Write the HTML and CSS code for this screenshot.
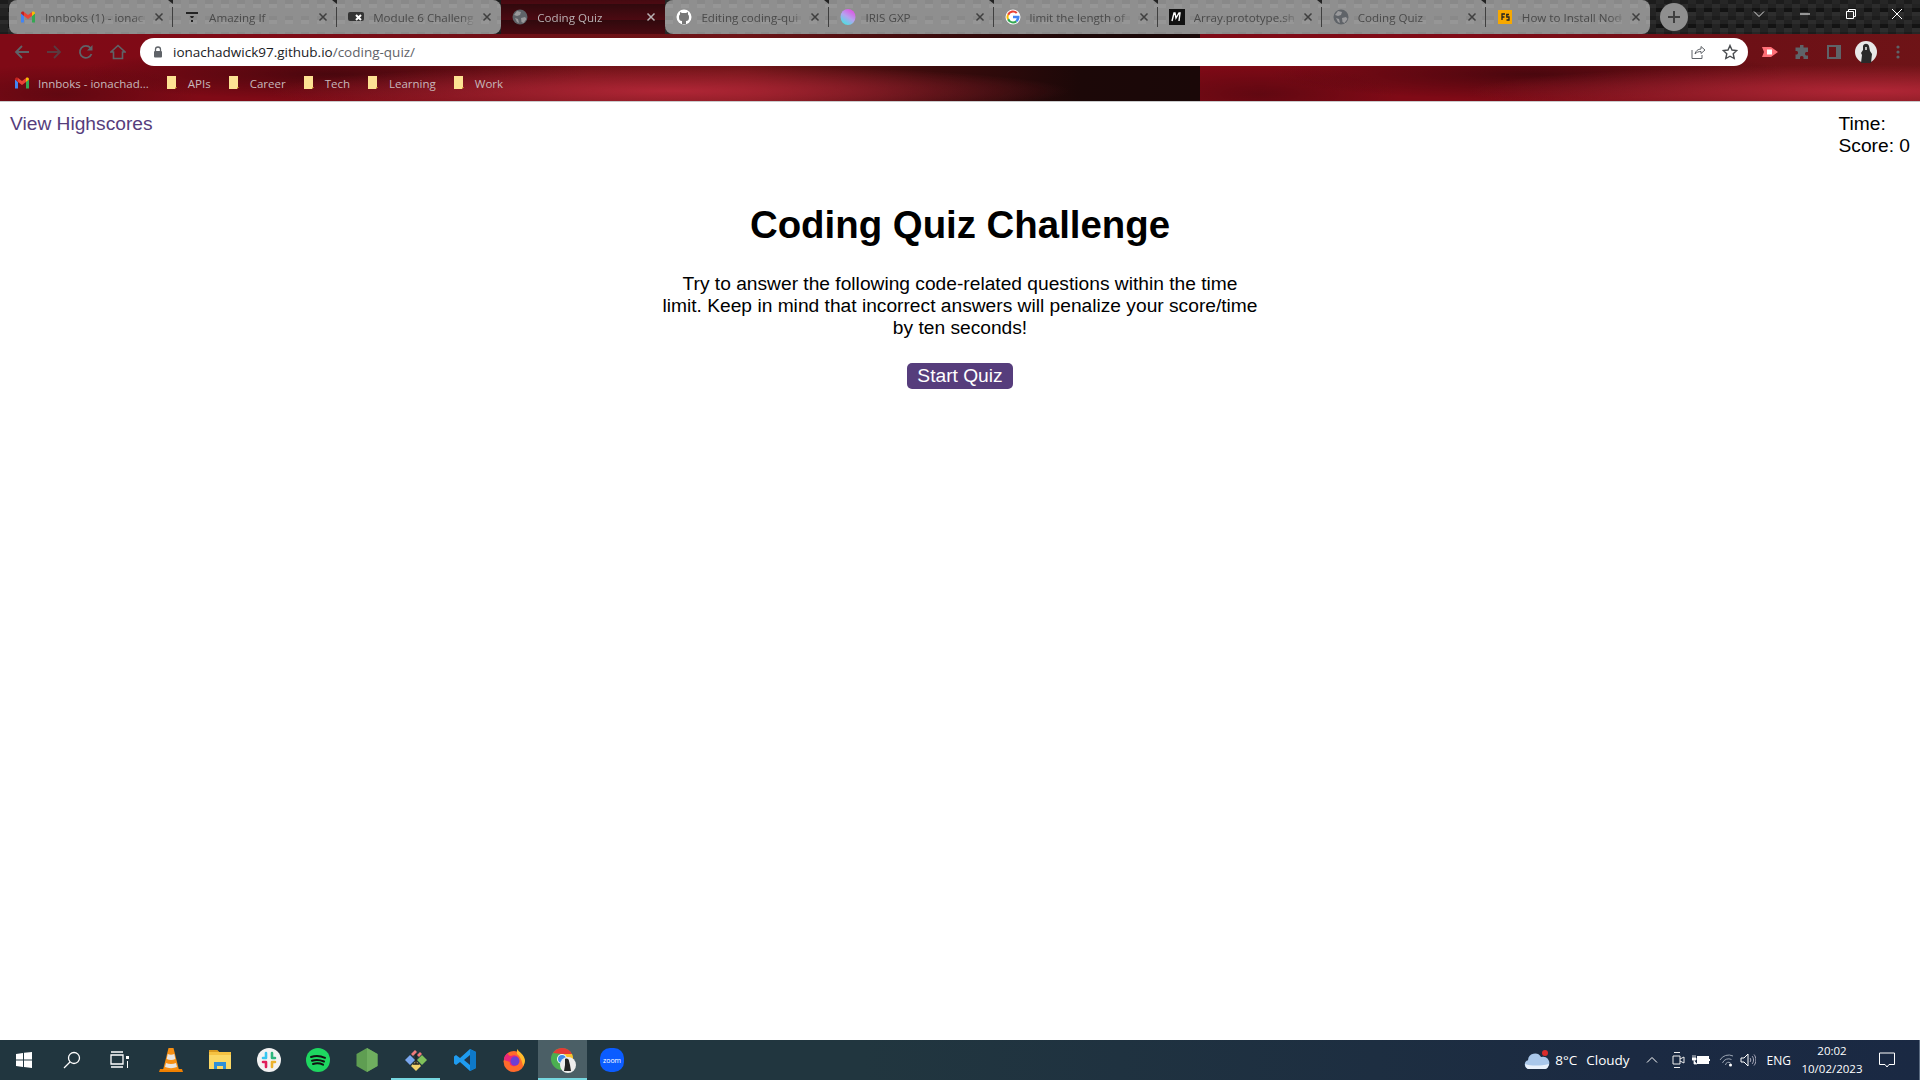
FILE: index.html
```html
<!DOCTYPE html>
<html lang="en">
<head>
  <meta charset="UTF-8">
  <title>Coding Quiz</title>
  <link rel="stylesheet" href="styles.css">
</head>
<body>
  <svg class="defs" width="0" height="0">
    <symbol id="gmail" viewBox="0 0 16 16">
      <path d="M1 4v9.500h3V7z" fill="#4285f4"/>
      <path d="M12 7v6.500h3V4z" fill="#34a853"/>
      <path d="M4 7V3l4 3 4-3v4L8 10z" fill="#ea4335"/>
      <path d="M1 4.500C1 2.500 3 2 4 3v4z" fill="#c5221f"/>
      <path d="M12 3c1-1 3-.5 3 1.500L12 7z" fill="#fbbc04"/>
    </symbol>
    <symbol id="globe" viewBox="0 0 16 16">
      <circle cx="8" cy="8" r="7.500" fill="#5f6368"/>
      <path d="M5 2l4 1-1 3-3 1-3-1zM9 9l4-1 1.500 2-3 4-2-1zM3 9l3 1 1 4-2-1z" fill="#9a9a9c"/>
    </symbol>
    <symbol id="folder" viewBox="0 0 12 16">
      <path d="M1 1h9v11l-1 0v2H1z" fill="#fde293"/>
      <path d="M9 12h2l-2 2z" fill="#e5b94a"/>
    </symbol>
    <symbol id="close" viewBox="0 0 10 10">
      <path d="M1.500 1.500l7 7M8.500 1.500l-7 7" stroke="#3f3f3f" stroke-width="1.500" fill="none"/>
    </symbol>
  </svg>

  <header class="browser">
    <div class="tabstrip">
      <div class="tab tab-first">
        <svg class="favicon"><use href="#gmail"/></svg>
        <span class="tab-title">Innboks (1) - ionac</span>
        <svg class="tab-close"><use href="#close"/></svg>
      </div>
      <div class="tab">
        <svg class="favicon" viewBox="0 0 16 16"><path d="M2 3h12v2H2zM6 7h4L9 9H7zM7 11h2v2H7z" fill="#222"/></svg>
        <span class="tab-title">Amazing If</span>
        <svg class="tab-close"><use href="#close"/></svg>
      </div>
      <div class="tab tab-last">
        <svg class="favicon" viewBox="0 0 16 16"><rect x="0" y="3" width="16" height="9" rx="2" fill="#333"/><path d="M8 6l5 5M13 6l-5 5" stroke="#fff" stroke-width="2"/></svg>
        <span class="tab-title">Module 6 Challeng</span>
        <svg class="tab-close"><use href="#close"/></svg>
      </div>
      <div class="tab tab-active">
        <svg class="favicon"><use href="#globe"/></svg>
        <span class="tab-title">Coding Quiz</span>
        <svg class="tab-close"><path d="M1.500 1.500l7 7M8.500 1.500l-7 7" stroke="#b9b1b3" stroke-width="1.500" fill="none"/></svg>
      </div>
      <div class="tab tab-first">
        <svg class="favicon" viewBox="0 0 16 16"><circle cx="8" cy="8" r="7.500" fill="#fff"/><path d="M6 15v-3c-2 0-3-1-3-4 0-1 .300-2 1-2.500V3l2 1h4l2-1v2.500c.700.500 1 1.500 1 2.500 0 3-1 4-3 4v3z" fill="#777"/></svg>
        <span class="tab-title">Editing coding-qui</span>
        <svg class="tab-close"><use href="#close"/></svg>
      </div>
      <div class="tab">
        <svg class="favicon" viewBox="0 0 16 16"><defs><linearGradient id="iris" x1="0.800" y1="0" x2="0.200" y2="1"><stop offset="0" stop-color="#e24be0"/><stop offset="0.500" stop-color="#b6a2f0"/><stop offset="1" stop-color="#3fe8e0"/></linearGradient></defs><ellipse cx="8" cy="8" rx="7.500" ry="8" fill="url(#iris)"/></svg>
        <span class="tab-title">IRIS GXP</span>
        <svg class="tab-close"><use href="#close"/></svg>
      </div>
      <div class="tab">
        <svg class="favicon" viewBox="0 0 16 16"><circle cx="8" cy="8" r="7.500" fill="#fff"/><path d="M8 3.500a4.500 4.500 0 0 1 3 1.200l1.500-1.500A6.500 6.500 0 0 0 2.200 5L4 6.400A4.500 4.500 0 0 1 8 3.500z" fill="#ea4335"/><path d="M3.500 8c0-.6.100-1.100.500-1.600L2.200 5a6.500 6.500 0 0 0 0 6L4 9.600C3.600 9.100 3.500 8.600 3.500 8z" fill="#fbbc04"/><path d="M8 12.500A4.500 4.500 0 0 1 4 9.600L2.200 11a6.500 6.500 0 0 0 10 1.900l-1.700-1.300c-.7.500-1.500.9-2.500.9z" fill="#34a853"/><path d="M14.500 8c0-.5 0-.9-.1-1.300H8v2.600h3.700c-.2.900-.6 1.600-1.200 2.300l1.700 1.300c1.400-1.200 2.300-2.900 2.300-4.900z" fill="#4285f4"/></svg>
        <span class="tab-title">limit the length of</span>
        <svg class="tab-close"><use href="#close"/></svg>
      </div>
      <div class="tab">
        <svg class="favicon" viewBox="0 0 16 16"><rect width="16" height="16" fill="#111"/><path d="M3 12l2-8h1l1 5 3-5h1l-1 8" fill="none" stroke="#fff" stroke-width="1.400"/></svg>
        <span class="tab-title">Array.prototype.sh</span>
        <svg class="tab-close"><use href="#close"/></svg>
      </div>
      <div class="tab">
        <svg class="favicon"><use href="#globe"/></svg>
        <span class="tab-title">Coding Quiz</span>
        <svg class="tab-close"><use href="#close"/></svg>
      </div>
      <div class="tab tab-end">
        <svg class="favicon" viewBox="0 0 16 16"><rect x="1" y="1" width="14" height="14" fill="#f7a800"/><path d="M5 11V5h3M5 8h2.500M12 5.500H9.800v2.500H12v3H9.500" fill="none" stroke="#222" stroke-width="1.300"/></svg>
        <span class="tab-title">How to Install Nod</span>
        <svg class="tab-close"><use href="#close"/></svg>
      </div>
      <div class="newtab">
        <svg width="14" height="14" viewBox="0 0 14 14"><path d="M7 1v12M1 7h12" stroke="#3f3f3f" stroke-width="2"/></svg>
      </div>
      <div class="window-controls">
        <div class="winbtn"><svg width="12" height="12" viewBox="0 0 12 12"><path d="M1 3.500l5 5 5-5" fill="none" stroke="#ddd"/></svg></div>
        <div class="winbtn"><svg width="12" height="12" viewBox="0 0 12 12"><path d="M1 6h10" stroke="#fff"/></svg></div>
        <div class="winbtn"><svg width="12" height="12" viewBox="0 0 12 12"><path d="M1.500 3.500h7v7h-7zM3.500 3.500v-2h7v7h-2" fill="none" stroke="#fff"/></svg></div>
        <div class="winbtn"><svg width="12" height="12" viewBox="0 0 12 12"><path d="M1 1l10 10M11 1L1 11" stroke="#fff"/></svg></div>
      </div>
    </div>

    <div class="toolbar">
      <div class="navbtn"><svg width="16" height="16" viewBox="0 0 16 16"><path d="M15 8H2M8 2L2 8l6 6" fill="none" stroke="#5f6368" stroke-width="1.800"/></svg></div>
      <div class="navbtn"><svg width="16" height="16" viewBox="0 0 16 16"><path d="M1 8h13M8 2l6 6-6 6" fill="none" stroke="#5a3a40" stroke-width="1.800"/></svg></div>
      <div class="navbtn"><svg width="16" height="16" viewBox="0 0 16 16"><path d="M13.500 10a6 6 0 1 1-1-6" fill="none" stroke="#5f6368" stroke-width="1.800"/><path d="M14.500 1v5.500H9z" fill="#5f6368"/></svg></div>
      <div class="navbtn"><svg width="16" height="16" viewBox="0 0 16 16"><path d="M8 1.500L1 8h2.500v6.500h9V8H15z" fill="none" stroke="#5f6368" stroke-width="1.600"/></svg></div>
      <div class="urlbar">
        <svg class="lock" width="12" height="12" viewBox="0 0 12 12"><path d="M3.500 5V3.500a2.500 2.500 0 0 1 5 0V5" fill="none" stroke="#5f6368" stroke-width="1.300"/><rect x="2" y="5" width="8" height="6.500" rx="1" fill="#5f6368"/></svg>
        <span class="url"><span class="url-host">ionachadwick97.github.io</span>/coding-quiz/</span>
        <span class="url-actions">
          <svg width="16" height="16" viewBox="0 0 16 16"><path d="M2 6v8.500h10V11" fill="none" stroke="#5f6368"/><path d="M5 10c.5-3 3-5 6-5V2.500L15 6l-4 3.500V7.500c-2.500 0-4.500.8-6 2.500z" fill="none" stroke="#5f6368"/></svg>
          <svg width="16" height="16" viewBox="0 0 16 16"><path d="M8 1.500l2 4.500 4.800.500-3.600 3.200 1 4.800L8 12.200l-4.200 2.300 1-4.800L1.200 6.500 6 6z" fill="none" stroke="#4a4d50" stroke-width="1.400"/></svg>
        </span>
      </div>
      <div class="navbtn nav-first"><svg width="18" height="14" viewBox="0 0 18 14"><path d="M1 2h9l7 5-7 5H1l2-5z" fill="#ff6f77"/><path d="M6 4.500h5v5H6z" fill="#fff"/></svg></div>
      <div class="navbtn"><svg width="16" height="16" viewBox="0 0 16 16"><path d="M6 1h3.500v2.500H14V8h-2a2 2 0 0 0 0 3.500h2V15H9.500v-2a2 2 0 0 0-3.500 0v2H1.500v-4.500H3A2 2 0 0 0 3 7H1.500V3.500H6z" fill="#5f6368"/></svg></div>
      <div class="navbtn"><svg width="16" height="16" viewBox="0 0 16 16"><path d="M2 2h12v12H2z" fill="none" stroke="#5f6368" stroke-width="2"/><path d="M10 2h4v12h-4z" fill="#5f6368"/></svg></div>
      <div class="navbtn"><svg width="22" height="22" viewBox="0 0 22 22"><circle cx="11" cy="11" r="11" fill="#e8e8e8"/><path d="M8 5c1-3 5-3 6 0l1 5 2 3-1 9H6l1-8-1-2 2-3z" fill="#2a2a2a"/><path d="M10 6h2v3h-2z" fill="#bbb"/></svg></div>
      <div class="navbtn"><svg width="4" height="14" viewBox="0 0 4 14"><circle cx="2" cy="2" r="1.600" fill="#5f6368"/><circle cx="2" cy="7" r="1.600" fill="#5f6368"/><circle cx="2" cy="12" r="1.600" fill="#5f6368"/></svg></div>
    </div>

    <div class="bookmarks">
      <div class="bookmark"><svg class="bm-gmail"><use href="#gmail"/></svg>Innboks - ionachad...</div>
      <div class="bookmark"><svg class="bm-folder"><use href="#folder"/></svg>APIs</div>
      <div class="bookmark"><svg class="bm-folder"><use href="#folder"/></svg>Career</div>
      <div class="bookmark"><svg class="bm-folder"><use href="#folder"/></svg>Tech</div>
      <div class="bookmark"><svg class="bm-folder"><use href="#folder"/></svg>Learning</div>
      <div class="bookmark"><svg class="bm-folder"><use href="#folder"/></svg>Work</div>
    </div>
  </header>

  <main class="page">
    <div class="quiz-top">
      <a class="highscores" href="#">View Highscores</a>
      <div class="stats">
        <div>Time:</div>
        <div>Score: 0</div>
      </div>
    </div>
    <section class="intro">
      <h1>Coding Quiz Challenge</h1>
      <p>Try to answer the following code-related questions within the time limit. Keep in mind that incorrect answers will penalize your score/time by ten seconds!</p>
      <button class="start">Start Quiz</button>
    </section>
  </main>

  <footer class="taskbar">
    <div class="task task-sys"><svg width="20" height="20" viewBox="0 0 20 20"><path d="M2 4l7-1v6.500H2zM10 2.800L18 2v7.500h-8zM2 10.500h7V17l-7-1zM10 10.500h8V18l-8-1.100z" fill="#fff"/></svg></div>
    <div class="task task-sys"><svg width="20" height="20" viewBox="0 0 20 20"><circle cx="12" cy="8" r="5.500" fill="none" stroke="#fff" stroke-width="1.300"/><path d="M8 12l-6 6" stroke="#fff" stroke-width="1.300"/></svg></div>
    <div class="task task-sys task-gap"><svg width="20" height="20" viewBox="0 0 20 20"><path d="M1 5h12v9H1zM1 2h12M1 17h12" fill="none" stroke="#fff" stroke-width="1.300"/><rect x="16" y="6" width="3" height="3" fill="#fff"/><path d="M17.500 11v7" stroke="#fff"/></svg></div>
    <div class="task"><svg width="24" height="26" viewBox="0 0 24 26"><path d="M1 22h22l1 3H0z" fill="#f08000"/><path d="M9.500 1h5L20 23H4z" fill="#f78f12"/><path d="M8.700 7c2 1 4.600 1 6.600 0l1 5c-2.500 1.200-6 1.200-8.600 0zM7 16c3 1.300 7 1.300 10 0l1 4c-3.500 1.500-8.500 1.500-12 0z" fill="#e9e6e2"/></svg></div>
    <div class="task"><svg width="24" height="22" viewBox="0 0 24 22"><path d="M1 1h8l2 2h12v17H1z" fill="#f5c242"/><path d="M1 1h8l2 2H1z" fill="#d99a1f"/><path d="M1 6h22v14H1z" fill="#fbd865"/><path d="M6 20v-7h12v7h-3v-3H9v3z" fill="#2f8fd8"/></svg></div>
    <div class="task"><svg width="24" height="24" viewBox="0 0 24 24"><circle cx="12" cy="12" r="12" fill="#f2f2f2"/><path d="M9 5v5M6 10h3" stroke="#36c5f0" stroke-width="2.600" stroke-linecap="round"/><path d="M15 5v5M15 10h3" stroke="#2eb67d" stroke-width="2.600" stroke-linecap="round"/><path d="M9 14v5M6 14h3" stroke="#e01e5a" stroke-width="2.600" stroke-linecap="round"/><path d="M15 14v5M15 14h3" stroke="#ecb22e" stroke-width="2.600" stroke-linecap="round"/></svg></div>
    <div class="task"><svg width="24" height="24" viewBox="0 0 24 24"><circle cx="12" cy="12" r="12" fill="#1ed760"/><path d="M5 9c4.500-1.500 9.500-1.200 14 .8M6 12.700c4-1.200 8-.9 12 .8M7 16c3.300-1 7-.8 10 .7" fill="none" stroke="#111" stroke-width="2" stroke-linecap="round"/></svg></div>
    <div class="task"><svg width="22" height="24" viewBox="0 0 22 24"><path d="M11 0l10.500 6v12L11 24 .5 18V6z" fill="#5f9e52"/><path d="M11 0l10.500 6v12L11 24z" fill="#6fae5f"/></svg></div>
    <div class="task task-open"><svg width="24" height="24" viewBox="0 0 24 24"><path d="M1 12l5-5 5 5-5 5z" fill="#7aa7f0"/><path d="M13 12l5-5 5 5-5 5z" fill="#7fc15b"/><path d="M7 18l5-5 5 5-5 5z" fill="#f2d36b"/><path d="M7 6l4-4 2 2-4 4zM13 7l3-3 2 2-3 3z" fill="#ef7b7b"/><path d="M12 6v10M9 16h6" stroke="#222" stroke-width="1.500"/></svg></div>
    <div class="task"><svg width="24" height="24" viewBox="0 0 24 24"><path d="M17 1l6 3v16l-6 3L7 14l-4 3-2-1.500V8.500L3 7l4 3z" fill="#1f9cf0"/><path d="M17 1l6 3v16l-6 3z" fill="#0e79c9"/><path d="M17 7l-6 5 6 5z" fill="#22364a"/></svg></div>
    <div class="task"><svg width="24" height="24" viewBox="0 0 24 24"><circle cx="12" cy="13.500" r="10.500" fill="#ff6a2b"/><path d="M15 1c2 3 7 5 8 11 0 3-1 5-2 6-1-5-3-10-6-12z" fill="#ffbb2c"/><path d="M2 12C2 8 4 6 6 5c0 2 1 3 3 3 2-1 5-1 7 1 2 3 1 8-3 9-4 1-6-2-5-4z" fill="#e8267a"/><circle cx="13" cy="13" r="4.500" fill="#6b3fd4"/></svg></div>
    <div class="task task-open task-active"><svg width="27" height="26" viewBox="0 0 27 26"><circle cx="13" cy="12" r="11" fill="#4caf50"/><path d="M4 6a11 11 0 0 1 19 1H13z" fill="#e53935"/><path d="M13 23a11 11 0 0 0 10-16h-8l2 4z" fill="#fbc02d"/><circle cx="13" cy="12" r="5" fill="#fff"/><circle cx="13" cy="12" r="4" fill="#3f8de8"/><circle cx="19" cy="18" r="8" fill="#eee"/><path d="M16 12c2-1 4 0 4 2l1 4 1 6h-7l1-6z" fill="#222"/></svg></div>
    <div class="task"><svg width="24" height="24" viewBox="0 0 24 24"><rect width="24" height="24" rx="10" fill="#0b5cff"/><text class="zoom-text" x="12" y="14.500">zoom</text></svg></div>

    <div class="tray">
      <svg class="tray-cloud" width="26" height="22" viewBox="0 0 26 22"><path d="M5 20a4.500 4.500 0 0 1-1-8.800A7 7 0 0 1 17 8a5.500 5.500 0 0 1 4 12z" fill="#a9c7ea"/><path d="M1 15c6 2 15 2 24 0-.5 3-2 5-4 5H5c-2 0-3.500-2-4-5z" fill="#e9f1fb"/><circle cx="21" cy="4" r="3" fill="#d92b2b"/></svg>
      <span class="weather-temp">8°C</span>
      <span class="weather-text">Cloudy</span>
      <svg class="tray-chevron" width="12" height="12" viewBox="0 0 12 12"><path d="M1 8.500l5-5 5 5" fill="none" stroke="#fff"/></svg>
      <svg class="tray-meet" width="14" height="18" viewBox="0 0 14 18"><path d="M2 1.500h6M2 16.500h6M1 5h7v8H1zM8 8l4-2v6l-4-2" fill="none" stroke="#eee"/></svg>
      <svg class="tray-power" width="18" height="12" viewBox="0 0 18 12"><path d="M3 1v3M1 1v3M0 4h4v2H0zM2 6v4h3" stroke="#fff" fill="#fff" stroke-width="0.800"/><rect x="5.500" y="2.500" width="11" height="7" fill="#fff" stroke="#fff"/><path d="M17.500 5v2" stroke="#fff"/></svg>
      <svg class="tray-wifi" width="16" height="14" viewBox="0 0 16 14"><path d="M1 7a10 10 0 0 1 13-4M3.500 10a6.500 6.500 0 0 1 9-3.500M6.500 12a3 3 0 0 1 5-2" fill="none" stroke="#9aa4b2"/><circle cx="11.500" cy="12" r="1.500" fill="#fff"/></svg>
      <svg class="tray-sound" width="16" height="14" viewBox="0 0 16 14"><path d="M1 5h3l4-4v12l-4-4H1z" fill="none" stroke="#fff"/><path d="M10 5c1 1 1 3 0 4M12 3c2 2 2 6 0 8M14 1.500c2.500 3 2.500 8 0 11" fill="none" stroke="#aab"/></svg>
      <span class="tray-lang">ENG</span>
      <div class="clock">
        <div>20:02</div>
        <div>10/02/2023</div>
      </div>
      <svg class="tray-notify" width="16" height="16" viewBox="0 0 16 16"><path d="M.5 1h15v11.500H10L8 15l-2-2.500H.5z" fill="none" stroke="#fff"/></svg>
    </div>
  </footer>
</body>
</html>
```

FILE: styles.css
```css
* {
  box-sizing: border-box;
}

html, body {
  height: 100%;
}

body {
  margin: 0;
  height: 1080px;
  overflow: hidden;
  display: flex;
  flex-direction: column;
  font-family: "Liberation Sans", Arial, sans-serif;
  background: #fff;
}

.defs {
  display: block;
  height: 0;
}

/* browser frame */
.browser {
  height: 102px;
  flex: none;
  border-bottom: 1px solid #c9cbcc;
  font-family: "Open Sans", "Noto Sans", sans-serif;
  font-size: 11.6px;
  background-color: #5a0c14;
  background-image:
    radial-gradient(ellipse 400px 26px at 670px 57px, rgba(176, 38, 54, 1), rgba(176, 38, 54, 0) 100%),
    radial-gradient(ellipse 260px 26px at 330px 40px, rgba(40, 4, 8, 0.6), rgba(40, 4, 8, 0) 100%),
    radial-gradient(ellipse 140px 30px at 60px 60px, rgba(40, 4, 8, 0.35), rgba(40, 4, 8, 0) 100%),
    linear-gradient(90deg, #7f0a16 0, #800a16 22%, #6d1016 45%, #6e1417 62%, #3a0b0c 78%, #1c0808 90%, #1a0808 100%);
  background-size: 1200px 68px;
  background-position: 0 34px;
  background-repeat: repeat-x;
}

.tabstrip {
  height: 34px;
  display: flex;
  padding-left: 9px;
  background-color: #131313;
  background-image:
    linear-gradient(27deg, #1c1c1c 4px, transparent 4px),
    linear-gradient(207deg, #1c1c1c 4px, transparent 4px),
    linear-gradient(27deg, #2c2c2c 4px, transparent 4px),
    linear-gradient(207deg, #2c2c2c 4px, transparent 4px),
    linear-gradient(90deg, #232323 8px, transparent 8px),
    linear-gradient(#262626 25%, #222 25%, #222 50%, transparent 50%, transparent 75%, #2e2e2e 75%, #2e2e2e);
  background-size: 16px 16px;
  background-position: 0 4px, 8px 0, 0 8px, 8px 4px, 0 0, 0 0;
}

.tab {
  position: relative;
  width: 164.1px;
  flex: none;
  display: flex;
  align-items: center;
  padding: 0 9px 0 11px;
  color: #4a4a4a;
  background-color: #8f8f8f;
  background-image:
    linear-gradient(27deg, #898989 4px, transparent 4px),
    linear-gradient(207deg, #898989 4px, transparent 4px),
    linear-gradient(27deg, #969696 4px, transparent 4px),
    linear-gradient(207deg, #969696 4px, transparent 4px);
  background-size: 16px 16px;
  background-position: 0 4px, 8px 0, 0 8px, 8px 4px;
}

/* divider between two tabs plus the small notch above it */
.tab::after {
  content: "";
  position: absolute;
  right: 0;
  top: 7px;
  height: 20px;
  border-right: 1px solid #3f3f3f;
}

.tab::before {
  content: "";
  position: absolute;
  right: -5px;
  top: 0;
  border-left: 5px solid transparent;
  border-right: 5px solid transparent;
  border-top: 4px solid #222;
}

.tab-first {
  border-radius: 8px 0 0 8px;
}

.tab-last, .tab-end {
  border-radius: 0 8px 8px 0;
}

.tab-last::after, .tab-last::before,
.tab-end::after, .tab-end::before,
.tab-active::after, .tab-active::before {
  display: none;
}

.tab-active {
  color: #b9b1b3;
  background-color: transparent;
  background-image: linear-gradient(180deg, #30090d, #4c0a12);
}

.favicon {
  width: 16px;
  height: 16px;
  flex: none;
  margin-right: 9px;
}

.tab-title {
  flex: 1;
  min-width: 0;
  overflow: hidden;
  white-space: nowrap;
  -webkit-mask-image: linear-gradient(90deg, #000 85%, transparent 100%);
  mask-image: linear-gradient(90deg, #000 85%, transparent 100%);
}

.tab-close {
  width: 10px;
  height: 10px;
  flex: none;
  margin-left: 6px;
}

.newtab {
  width: 28px;
  height: 28px;
  margin: 3px 0 0 10px;
  border-radius: 50%;
  background: #8f8f8f;
  display: flex;
  align-items: center;
  justify-content: center;
}

.window-controls {
  margin-left: auto;
  display: flex;
}

.winbtn {
  width: 46px;
  height: 28px;
  display: flex;
  align-items: center;
  justify-content: center;
}

.toolbar {
  height: 36px;
  display: flex;
  align-items: center;
  padding: 0 6px;
}

.navbtn {
  width: 32px;
  height: 28px;
  flex: none;
  display: flex;
  align-items: center;
  justify-content: center;
}

.nav-first {
  margin-left: 6px;
}

.urlbar {
  flex: 1;
  height: 28px;
  margin-left: 6px;
  padding: 0 10px 0 12px;
  background: #fff;
  border-radius: 14px;
  display: flex;
  align-items: center;
  font-size: 13.5px;
  color: #5f6368;
}

.lock {
  margin-right: 9px;
}

.url-host {
  color: #202124;
}

.url-actions {
  margin-left: auto;
  display: flex;
  gap: 16px;
}

.bookmarks {
  height: 31px;
  padding: 0 0 5px 14px;
  display: flex;
  align-items: center;
  gap: 17px;
  color: #c8b8bb;
  font-size: 11.5px;
}

.bookmark {
  display: flex;
  align-items: center;
  gap: 10px;
}

.bm-gmail {
  width: 16px;
  height: 16px;
  margin-right: -2px;
}

.bm-folder {
  width: 12px;
  height: 16px;
}

/* the quiz page */
.page {
  flex: 1;
  color: #000;
}

.quiz-top {
  display: flex;
  justify-content: space-between;
  padding: 11px 10px 0;
  font-size: 19.2px;
  line-height: 22px;
}

.highscores {
  color: #563d7c;
  text-decoration: none;
}

.intro {
  width: 597px;
  margin: 0 auto;
  text-align: center;
}

h1 {
  margin: 45px 0 0;
  font-size: 38.4px;
  line-height: 46px;
}

.intro p {
  margin: 25px 0 0;
  font-size: 19.2px;
  line-height: 22px;
}

.start {
  display: inline-block;
  margin-top: 24px;
  padding: 2px 10px;
  height: 26px;
  border: none;
  border-radius: 5px;
  background: #563d7c;
  color: #fff;
  font-family: "Liberation Sans", Arial, sans-serif;
  font-size: 19.2px;
  line-height: 22px;
}

/* windows taskbar */
.taskbar {
  height: 40px;
  flex: none;
  display: flex;
  align-items: center;
  color: #fff;
  font-family: "Open Sans", "Noto Sans", sans-serif;
  background: linear-gradient(90deg, #21363f 0, #21363f 45%, #1b2a42 85%, #1a2943 100%);
}

.task {
  width: 49px;
  height: 40px;
  flex: none;
  display: flex;
  align-items: center;
  justify-content: center;
}

.task-sys {
  width: 48px;
}

.task-gap {
  margin-right: 2px;
}

.task-open {
  box-shadow: inset 0 -2px 0 #76d7e0;
}

.task-active {
  background: #4b5f66;
}

.zoom-text {
  fill: #fff;
  font-size: 7px;
  text-anchor: middle;
}

.tray {
  margin-left: auto;
  height: 40px;
  display: flex;
  align-items: center;
  font-size: 13.5px;
  border-right: 1px solid #5a6a80;
  padding-right: 24px;
}

.weather-temp {
  margin-left: 5px;
}

.weather-text {
  margin-left: 9px;
}

.tray-chevron {
  margin-left: 16px;
}

.tray-meet {
  margin-left: 14px;
}

.tray-power {
  margin-left: 6px;
}

.tray-wifi {
  margin-left: 9px;
}

.tray-sound {
  margin-left: 5px;
}

.tray-lang {
  margin-left: 11px;
  font-size: 12px;
}

.clock {
  width: 76px;
  margin-left: 3px;
  text-align: center;
  font-size: 11.5px;
  line-height: 18px;
}

.tray-notify {
  margin-left: 9px;
}
```
